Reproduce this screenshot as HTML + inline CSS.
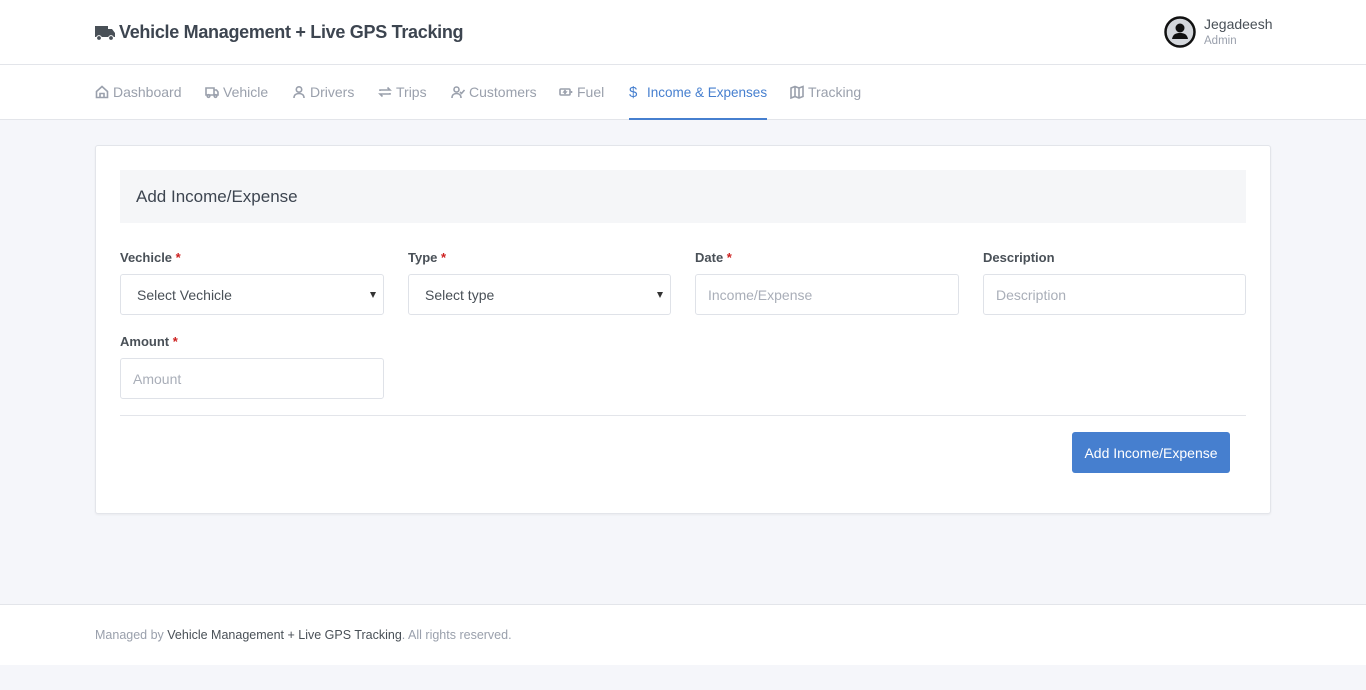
<!DOCTYPE html>
<html><head><meta charset="utf-8"><style>
*{box-sizing:border-box;margin:0;padding:0}
body{width:1366px;height:690px;background:#f5f6fa;font-family:"Liberation Sans",sans-serif;position:relative;overflow:hidden;color:#495057}
.a{position:absolute}
#hdr{left:0;top:0;width:1366px;height:65px;background:#fff;border-bottom:1px solid #e3e5ea}
#nav{left:0;top:65px;width:1366px;height:55px;background:#fff;border-bottom:1px solid #e3e5ea}
.ni{top:84px;font-size:14px;color:#9aa0ac;white-space:nowrap;display:flex;align-items:center;gap:4px}
.ni svg{width:14px;height:14px;fill:none;stroke:#9aa0ac;stroke-width:1.6}
.lbl{font-size:13px;font-weight:bold;color:#495057;top:250px}
.lbl b{color:#cd201f}
.inp{height:41px;border:1px solid #dfe2e8;border-radius:3px;background:#fff;font-size:14px;color:#a9aeb8;padding:12px 12px}
.sel{color:#495057;padding-left:16px}
.sel:after{content:"";position:absolute;right:7px;top:17px;border-left:3.5px solid transparent;border-right:3.5px solid transparent;border-top:6px solid #333}
</style></head><body>
<div id="hdr" class="a"></div>
<div class="a" style="left:95px;top:22px;font-size:18px;font-weight:bold;color:#3d4550;display:flex;align-items:center;gap:3px;letter-spacing:-0.3px">
<svg width="21" height="16" viewBox="0 0 21 16"><path d="M0 1h13v11H0z M13 4h4l3 4v4h-7z" fill="#495057"/><circle cx="4" cy="13" r="2.4" fill="#495057" stroke="#fff" stroke-width="1"/><circle cx="16" cy="13" r="2.4" fill="#495057" stroke="#fff" stroke-width="1"/></svg>
Vehicle Management + Live GPS Tracking</div>
<svg class="a" style="left:1164px;top:16px" width="32" height="32" viewBox="0 0 32 32"><circle cx="16" cy="16" r="14.5" fill="#d4d7dc" stroke="#111" stroke-width="2.5"/><circle cx="16" cy="12" r="4.5" fill="#111"/><path d="M8 23c1-5 4-6 8-6s7 1 8 6z" fill="#111"/></svg>
<div class="a" style="left:1204px;top:16px;font-size:14px;color:#495057">Jegadeesh</div>
<div class="a" style="left:1204px;top:35px;font-size:11.5px;color:#9aa0ac">Admin</div>
<div id="nav" class="a"></div>
<div class="a ni" style="left:95px"><svg viewBox="0 0 14 14"><path d="M1.5 6.5 7 1.5l5.5 5v6h-11z M5 12.5v-4h4v4"/></svg>Dashboard</div>
<div class="a ni" style="left:205px"><svg viewBox="0 0 14 14"><path d="M1 3h8v7H1z M9 5h2.5l1.5 2v3H9"/><circle cx="3.5" cy="11" r="1.3"/><circle cx="10.5" cy="11" r="1.3"/></svg>Vehicle</div>
<div class="a ni" style="left:292px"><svg viewBox="0 0 14 14"><circle cx="7" cy="4.5" r="2.7"/><path d="M2 13c0-3 2-4.5 5-4.5s5 1.5 5 4.5"/></svg>Drivers</div>
<div class="a ni" style="left:378px"><svg viewBox="0 0 14 14"><path d="M2 6V5h10L9.5 2.5 M12 8v1H2l2.5 2.5"/></svg>Trips</div>
<div class="a ni" style="left:451px"><svg viewBox="0 0 14 14"><circle cx="5.5" cy="4.5" r="2.5"/><path d="M1 13c0-3 2-4.5 4.5-4.5S10 10 10 13 M9 7l1.5 1.5L13.5 5"/></svg>Customers</div>
<div class="a ni" style="left:559px"><svg viewBox="0 0 14 14"><rect x="1" y="4" width="10" height="6" rx="1"/><path d="M12.5 6v2 M6.5 5 5 7h2l-1.5 2"/></svg>Fuel</div>
<div class="a ni" style="left:629px;color:#467fcf;font-size:13.5px;top:84px"><span style="font-size:15px;width:14px">$</span>Income &amp; Expenses</div>
<div class="a" style="left:629px;top:118px;width:138px;height:2px;background:#467fcf"></div>
<div class="a ni" style="left:790px"><svg viewBox="0 0 14 14"><path d="M1 3l4-1.5 4 1.5 4-1.5v10L9 13 5 11.5 1 13z M5 1.5v10 M9 3v10"/></svg>Tracking</div>

<div class="a" style="left:95px;top:145px;width:1176px;height:369px;background:#fff;border:1px solid #e3e5ea;border-radius:3px;box-shadow:0 1px 2px rgba(0,0,0,.05)"></div>
<div class="a" style="left:120px;top:170px;width:1126px;height:53px;background:#f5f6f8;font-size:17px;color:#3d4550;padding:17px 16px">Add Income/Expense</div>

<div class="a lbl" style="left:120px">Vechicle <b>*</b></div>
<div class="a lbl" style="left:408px">Type <b>*</b></div>
<div class="a lbl" style="left:695px">Date <b>*</b></div>
<div class="a lbl" style="left:983px">Description</div>
<div class="a inp sel" style="left:120px;top:274px;width:264px">Select Vechicle</div>
<div class="a inp sel" style="left:408px;top:274px;width:263px">Select type</div>
<div class="a inp" style="left:695px;top:274px;width:264px">Income/Expense</div>
<div class="a inp" style="left:983px;top:274px;width:263px">Description</div>
<div class="a lbl" style="left:120px;top:334px">Amount <b>*</b></div>
<div class="a inp" style="left:120px;top:358px;width:264px">Amount</div>
<div class="a" style="left:120px;top:415px;width:1126px;height:1px;background:#e3e5ea"></div>
<div class="a" style="left:1072px;top:432px;width:158px;height:41px;background:#467fcf;border-radius:3px;color:#fff;font-size:14px;text-align:center;line-height:42px">Add Income/Expense</div>

<div class="a" style="left:0;top:604px;width:1366px;height:61px;background:#fff;border-top:1px solid #e3e5ea"></div>
<div class="a" style="left:95px;top:628px;font-size:12.5px;color:#9aa0ac">Managed by <span style="color:#495057">Vehicle Management + Live GPS Tracking</span>. All rights reserved.</div>
</body></html>
